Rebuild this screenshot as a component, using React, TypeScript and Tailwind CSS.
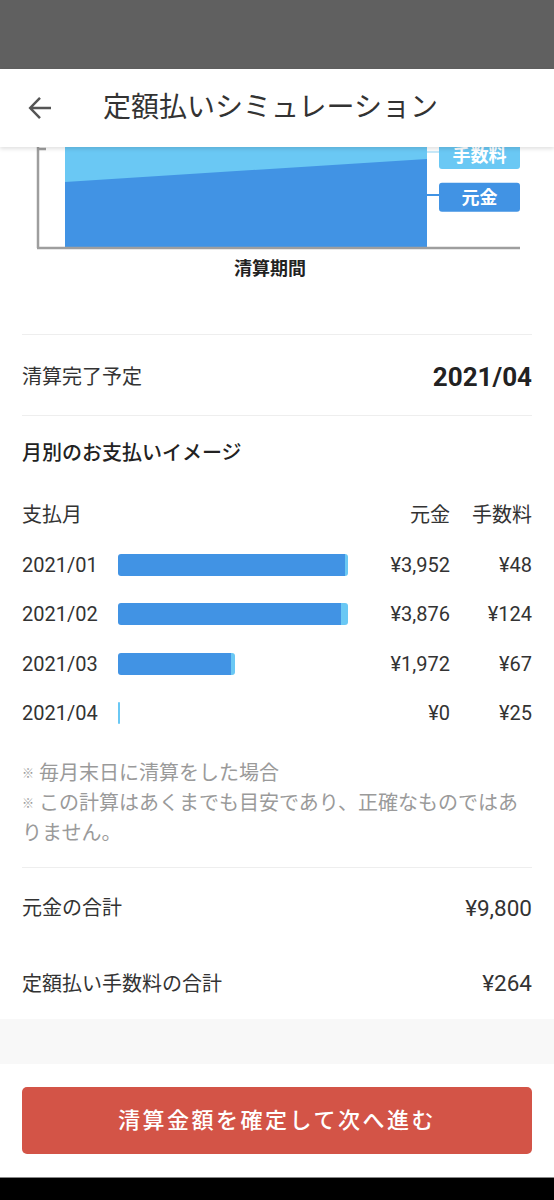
import React from 'react'

const months = [
  { m: '2021/01', p: 3952, f: 48, pt: '¥3,952', ft: '¥48' },
  { m: '2021/02', p: 3876, f: 124, pt: '¥3,876', ft: '¥124' },
  { m: '2021/03', p: 1972, f: 67, pt: '¥1,972', ft: '¥67' },
  { m: '2021/04', p: 0, f: 25, pt: '¥0', ft: '¥25' },
]

const SCALE = 230 / 4000

function Chart() {
  return (
    <svg width="554" height="103" viewBox="0 0 554 103" className="block">
      <rect x="65" y="0" width="362" height="101" fill="#6ac8f4" />
      <polygon points="65,35 427,12 427,101 65,101" fill="#4193e4" />
      <line x1="38" y1="0" x2="38" y2="101" stroke="#9e9e9e" strokeWidth="2.5" />
      <line x1="37" y1="101" x2="520" y2="101" stroke="#9e9e9e" strokeWidth="2.5" />
      <line x1="38" y1="2" x2="46" y2="2" stroke="#9e9e9e" strokeWidth="2.5" />
      <line x1="427" y1="5" x2="440" y2="5" stroke="#c8e9f9" strokeWidth="2" />
      <rect x="439" y="-10" width="81" height="32" rx="3" fill="#6ac8f4" />
      <text x="479.5" y="15" textAnchor="middle" fill="#fff" fontSize="18" fontWeight="700" fontFamily="Roboto, 'Noto Sans CJK JP', sans-serif">手数料</text>
      <line x1="427" y1="48" x2="440" y2="48" stroke="#4193e4" strokeWidth="2" />
      <rect x="439" y="35.7" width="81" height="29" rx="3" fill="#4193e4" />
      <text x="479.5" y="56.5" textAnchor="middle" fill="#fff" fontSize="18" fontWeight="700" fontFamily="Roboto, 'Noto Sans CJK JP', sans-serif">元金</text>
    </svg>
  )
}

export default function App() {
  return (
    <div className="w-[554px] h-[1200px] overflow-hidden bg-white text-[#333] font-[Roboto,'Noto_Sans_CJK_JP',sans-serif]">
      {/* status bar */}
      <div className="h-[69px] bg-[#606060]" />

      {/* app bar */}
      <div className="relative z-10 h-[78px] bg-white flex items-center shadow-[0_2px_4px_rgba(0,0,0,0.12)]">
        <svg width="24" height="24" viewBox="0 0 24 24" className="ml-[28px]" fill="none" stroke="#555" strokeWidth="2.5">
          <path d="M23 12H2.5M12 1.8 2.2 12 12 22.2" />
        </svg>
        <h1 className="ml-[51px] text-[28px] leading-none text-[#333]">定額払いシミュレーション</h1>
      </div>

      {/* chart */}
      <div className="h-[187px]">
        <Chart />
        <p className="mt-[7px] pr-[14px] text-center text-[18px] leading-[24px] font-bold text-[#222]">清算期間</p>
      </div>

      <div className="mx-[22px] border-t border-[#eeeeee]" />

      <div className="h-[80px] pt-[4px] px-[22px] flex items-center justify-between">
        <span className="text-[20px]">清算完了予定</span>
        <span className="text-[26px] font-bold text-[#222]">2021/04</span>
      </div>

      <div className="mx-[22px] border-t border-[#eeeeee]" />

      {/* monthly */}
      <div className="px-[22px]">
        <div className="h-[74px] flex items-center">
          <h2 className="text-[20px] font-medium text-[#222]">月別のお支払いイメージ</h2>
        </div>
        <div className="h-[50px] flex items-center text-[20px]">
          <span className="flex-1">支払月</span>
          <span className="w-[80px] text-right">元金</span>
          <span className="w-[82px] text-right">手数料</span>
        </div>
        {months.map((r) => (
          <div key={r.m} className="h-[49.5px] flex items-center text-[20px]">
            <span className="w-[96px]">{r.m}</span>
            <div className="flex-1">
              <div className="flex h-[22px] w-fit rounded-[3px] overflow-hidden">
                {r.p > 0 && <div className="bg-[#4193e4]" style={{ width: r.p * SCALE }} />}
                <div className="bg-[#6ac8f4]" style={{ width: Math.max(2, r.f * SCALE) }} />
              </div>
            </div>
            <span className="w-[80px] text-right">{r.pt}</span>
            <span className="w-[82px] text-right">{r.ft}</span>
          </div>
        ))}

        <div className="mt-[21px] pb-[20px] text-[20px] leading-[28.5px] text-[#9a9a9a]">
          <p><span className="text-[12px] align-middle">※</span> 毎月末日に清算をした場合</p>
          <p><span className="text-[12px] align-middle">※</span> この計算はあくまでも目安であり、正確なものではありません。</p>
        </div>
      </div>

      <div className="mx-[22px] border-t border-[#eeeeee]" />

      {/* totals */}
      <div className="px-[22px] text-[20px]">
        <div className="h-[80px] flex items-center justify-between">
          <span>元金の合計</span>
          <span className="text-[22.5px]">¥9,800</span>
        </div>
        <div className="h-[71px] flex items-center justify-between">
          <span>定額払い手数料の合計</span>
          <span className="text-[22.5px]">¥264</span>
        </div>
      </div>

      <div className="h-[45px] bg-[#f8f8f8]" />

      {/* footer */}
      <div className="h-[113px] px-[22px] pt-[23px]">
        <button className="w-full h-[67px] rounded-[5px] bg-[#d35447] text-white text-[22px] font-medium tracking-[2.5px]">
          清算金額を確定して次へ進む
        </button>
      </div>

      <div className="h-[23px] bg-black border-t border-[#888]" />
    </div>
  )
}
